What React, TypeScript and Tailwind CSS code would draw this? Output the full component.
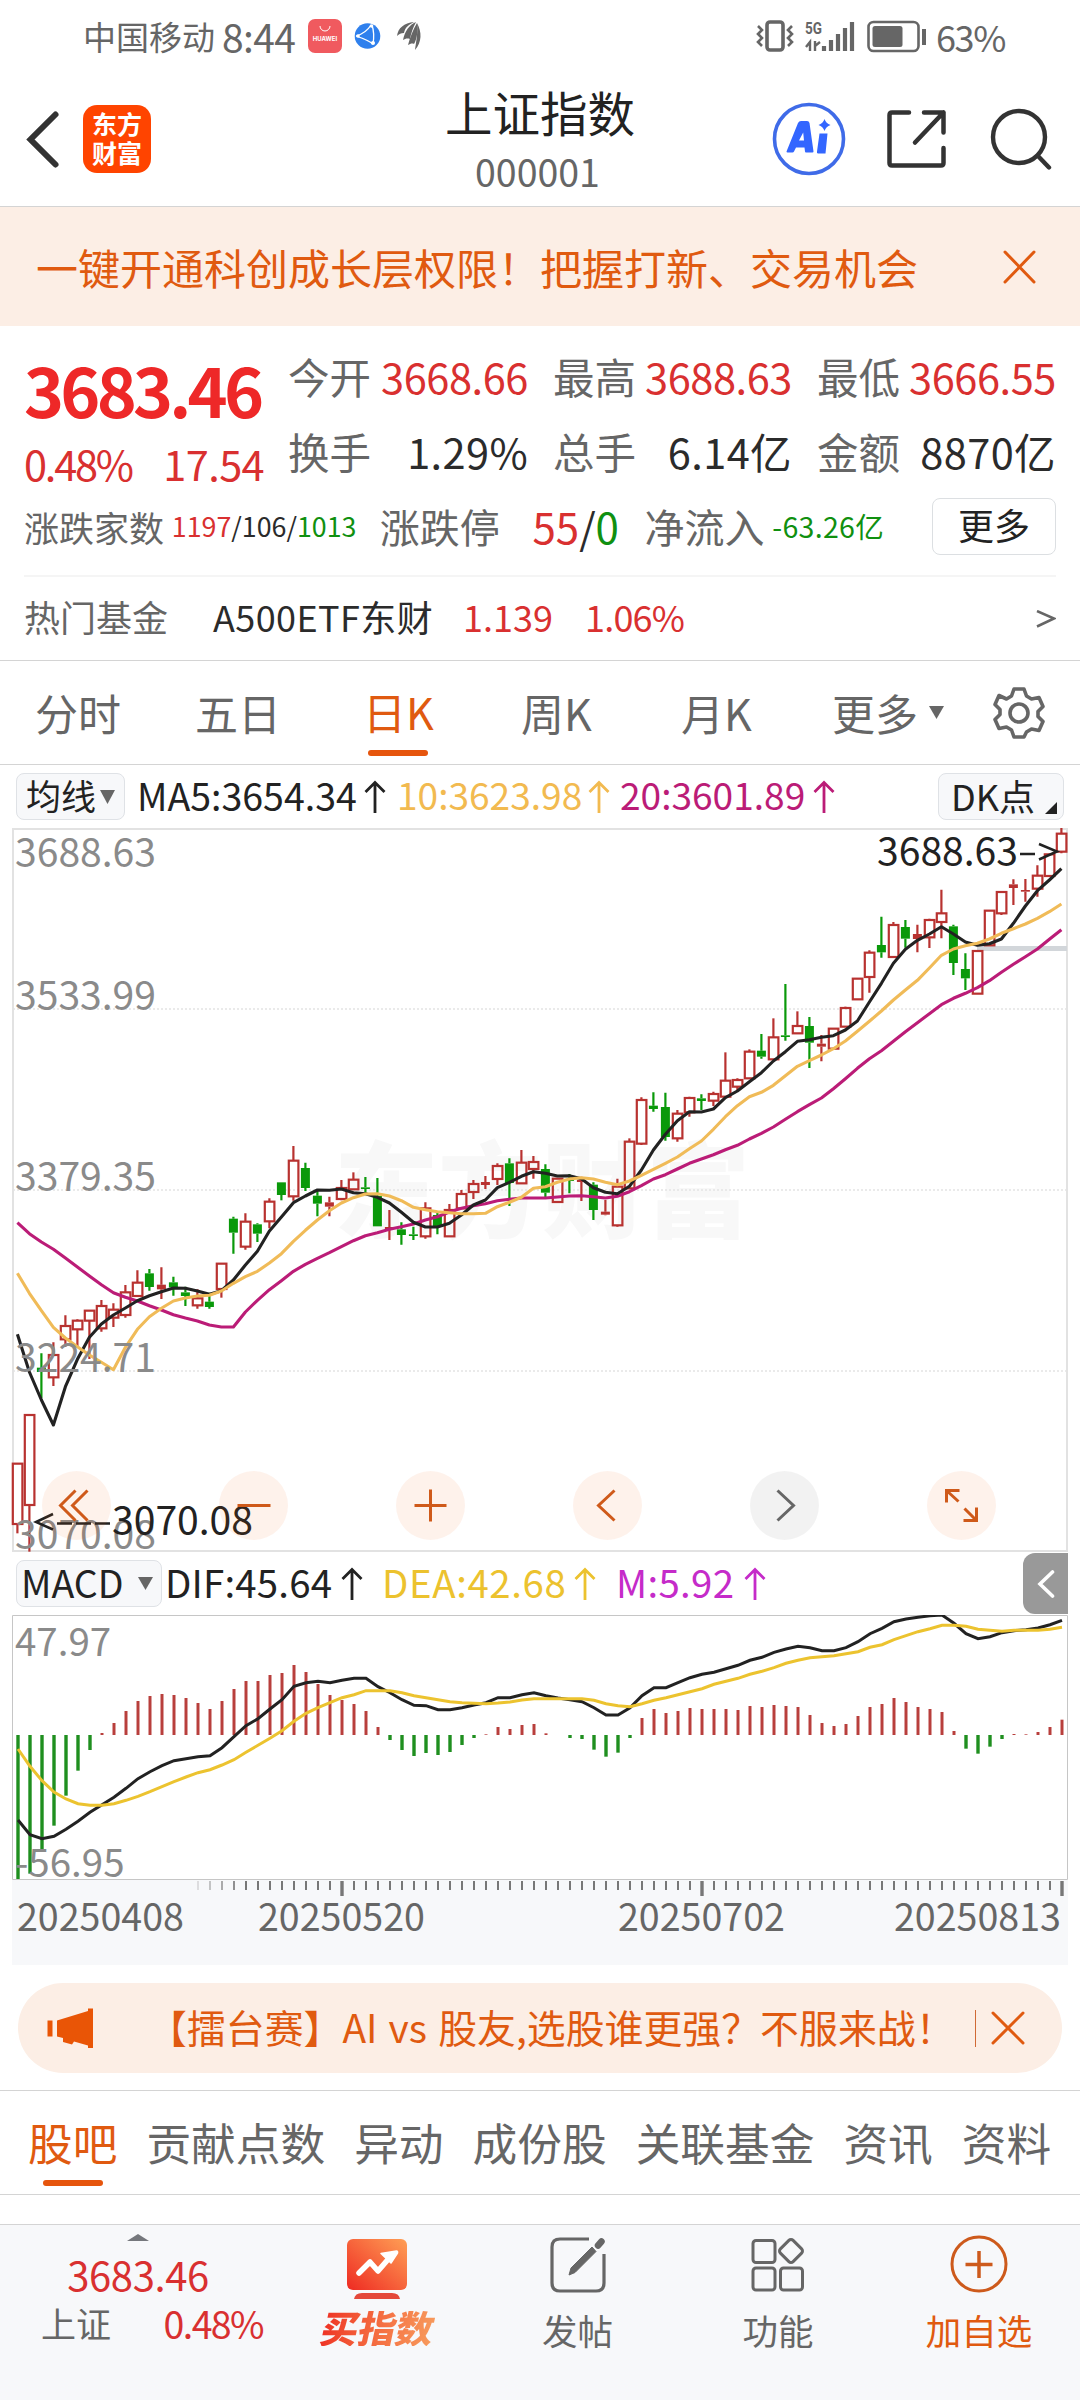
import React from "react"

type Candle = [up: number, high: number, top: number, bottom: number, low: number]

// every series below is stored in thirds of a pixel, measured down from the panel origin
const candles: Candle[] = [
  [1, 1931, 1931, 2112, 2140], [1, 1785, 1785, 2055, 2195], [0, 1600, 1643, 1656, 1735], [1, 1567, 1605, 1672, 1698],
  [1, 1486, 1518, 1558, 1580], [1, 1498, 1502, 1528, 1580], [1, 1470, 1472, 1502, 1617], [1, 1440, 1458, 1525, 1535],
  [1, 1450, 1469, 1493, 1521], [1, 1395, 1417, 1485, 1493], [1, 1351, 1388, 1428, 1430], [0, 1347, 1360, 1401, 1412],
  [1, 1342, 1394, 1408, 1437], [0, 1370, 1387, 1402, 1427], [0, 1400, 1417, 1428, 1458], [1, 1408, 1435, 1456, 1466],
  [0, 1418, 1445, 1461, 1466], [1, 1331, 1331, 1407, 1433], [0, 1190, 1196, 1238, 1301], [1, 1180, 1205, 1280, 1289],
  [0, 1210, 1213, 1241, 1266], [1, 1135, 1145, 1204, 1225], [0, 1087, 1087, 1125, 1141], [1, 978, 1022, 1129, 1142],
  [0, 1028, 1044, 1104, 1113], [0, 1110, 1127, 1151, 1189], [1, 1130, 1147, 1160, 1189], [1, 1080, 1104, 1137, 1141],
  [1, 1057, 1079, 1108, 1108], [0, 1071, 1102, 1107, 1118], [0, 1074, 1128, 1219, 1219], [1, 1170, 1221, 1227, 1260],
  [0, 1207, 1228, 1245, 1274], [0, 1220, 1243, 1248, 1260], [1, 1147, 1165, 1249, 1256], [0, 1178, 1185, 1220, 1243],
  [1, 1152, 1170, 1249, 1249], [1, 1110, 1122, 1165, 1165], [1, 1080, 1092, 1116, 1137], [1, 1068, 1086, 1095, 1107],
  [1, 1030, 1038, 1077, 1095], [0, 1015, 1030, 1089, 1158], [1, 990, 1028, 1090, 1090], [1, 1008, 1026, 1047, 1076],
  [0, 1033, 1047, 1118, 1133], [1, 1076, 1076, 1146, 1146], [0, 1062, 1078, 1083, 1120], [1, 1070, 1080, 1086, 1143],
  [0, 1087, 1094, 1170, 1200], [1, 1140, 1175, 1184, 1186], [1, 1076, 1100, 1216, 1220], [1, 955, 965, 1105, 1105],
  [1, 832, 840, 971, 975], [0, 817, 857, 867, 875], [0, 818, 861, 951, 962], [1, 870, 881, 955, 965],
  [1, 830, 834, 877, 890], [0, 823, 835, 843, 870], [1, 815, 822, 842, 858], [1, 697, 782, 830, 830],
  [1, 775, 780, 800, 810], [1, 688, 695, 775, 775], [0, 642, 692, 710, 716], [1, 595, 652, 718, 718],
  [0, 492, 646, 651, 662], [1, 574, 618, 640, 640], [0, 591, 618, 668, 744], [1, 645, 671, 680, 724],
  [1, 626, 626, 686, 686], [1, 560, 564, 620, 620], [1, 476, 476, 538, 538], [1, 391, 398, 471, 518],
  [0, 290, 375, 397, 413], [1, 306, 315, 411, 411], [0, 300, 321, 356, 383], [1, 314, 342, 357, 397],
  [1, 296, 300, 352, 384], [1, 209, 280, 306, 355], [0, 314, 319, 429, 465], [0, 400, 447, 475, 510],
  [1, 393, 393, 521, 521], [1, 272, 272, 376, 376], [1, 216, 216, 280, 285], [1, 178, 193, 204, 255],
  [1, 177, 210, 215, 245], [1, 136, 167, 206, 230], [1, 103, 103, 168, 168], [1, 24, 41, 95, 100],
]

const ma5 = [
  1543, 1656, 1740, 1815, 1700, 1618, 1552, 1512, 1485, 1464, 1442, 1427, 1415, 1404, 1405, 1413, 1423, 1412, 1380, 1335,
  1294, 1233, 1191, 1148, 1128, 1110, 1111, 1107, 1118, 1121, 1132, 1149, 1177, 1207, 1221, 1221, 1210, 1185, 1155, 1140,
  1103, 1087, 1069, 1055, 1060, 1068, 1067, 1076, 1103, 1117, 1121, 1099, 1050, 990, 943, 902, 875, 876, 867, 833,
  813, 785, 758, 723, 695, 664, 659, 652, 647, 630, 603, 546, 490, 430, 388, 361, 342, 320, 342, 366,
  376, 371, 357, 310, 258, 212, 180, 146,
]

const ma10 = [
  1360, 1420, 1472, 1522, 1554, 1580, 1605, 1627, 1649, 1582, 1528, 1490, 1465, 1443, 1434, 1428, 1426, 1413, 1390, 1370,
  1354, 1329, 1301, 1264, 1231, 1200, 1172, 1149, 1133, 1122, 1121, 1128, 1142, 1162, 1169, 1175, 1178, 1181, 1181, 1180,
  1160, 1147, 1132, 1105, 1100, 1087, 1077, 1073, 1077, 1087, 1094, 1083, 1066, 1048, 1030, 1011, 986, 963, 928, 890,
  857, 830, 817, 796, 767, 739, 722, 705, 686, 663, 634, 604, 573, 540, 510, 481, 444, 406, 387, 377,
  370, 357, 340, 326, 312, 295, 275, 252,
]

const ma20 = [
  1208, 1241, 1266, 1288, 1314, 1341, 1368, 1394, 1418, 1432, 1443, 1457, 1470, 1484, 1494, 1503, 1515, 1521, 1521, 1476,
  1441, 1409, 1382, 1354, 1333, 1315, 1298, 1280, 1262, 1247, 1238, 1228, 1220, 1212, 1200, 1190, 1176, 1165, 1157, 1151,
  1142, 1138, 1134, 1134, 1134, 1131, 1128, 1127, 1130, 1134, 1129, 1115, 1097, 1077, 1064, 1047, 1030, 1017, 1004, 989,
  976, 957, 940, 921, 898, 875, 854, 834, 806, 776, 745, 716, 692, 664, 635, 608, 581, 554, 535, 520,
  503, 482, 457, 433, 410, 387, 358, 329,
]

const macd = [
  -432, -416, -345, -272, -182, -107, -45, 6, 36, 72, 102, 117, 123, 120, 111, 96, 78, 102, 138, 162,
  162, 180, 186, 210, 189, 153, 120, 105, 93, 72, 24, -15, -45, -63, -54, -60, -51, -30, -9, 2,
  24, 18, 30, 33, 5, 0, -9, -12, -44, -65, -53, -9, 51, 78, 66, 72, 81, 78, 78, 78,
  75, 87, 84, 90, 87, 84, 60, 36, 27, 33, 57, 84, 93, 111, 99, 84, 78, 69, 12, -41,
  -56, -35, -12, 3, 2, 9, 24, 46,
]

const dif = [
  841, 885, 897, 890, 869, 845, 818, 795, 773, 746, 717, 696, 678, 663, 657, 651, 648, 624, 591, 558,
  537, 508, 480, 440, 429, 425, 429, 422, 416, 416, 441, 459, 480, 497, 498, 510, 510, 504, 496, 489,
  474, 474, 465, 459, 468, 475, 480, 486, 504, 526, 526, 504, 468, 444, 444, 429, 414, 404, 398, 387,
  377, 362, 353, 338, 328, 320, 324, 333, 333, 324, 306, 282, 266, 246, 238, 233, 228, 226, 251, 282,
  297, 291, 279, 273, 270, 265, 255, 242,
]

const dea = [
  628, 680, 723, 757, 778, 792, 797, 797, 792, 782, 770, 756, 741, 726, 712, 699, 690, 676, 660, 638,
  617, 596, 573, 545, 521, 504, 489, 474, 465, 453, 453, 453, 459, 468, 474, 480, 486, 489, 491, 492,
  490, 487, 481, 477, 477, 477, 477, 477, 482, 492, 498, 501, 492, 482, 474, 465, 456, 447, 434, 425,
  416, 404, 395, 384, 371, 362, 354, 351, 348, 342, 336, 323, 315, 300, 288, 276, 267, 257, 257, 260,
  269, 272, 275, 272, 272, 272, 269, 263,
]

const line = (values: number[], x0: number, origin: number) =>
  values.map((v, i) => `${x0 + i * 12},${((v - origin) / 3).toFixed(1)}`).join(" ")

const StatusBar = () => (
  <div className="flex h-[72px] items-center pl-[83px] text-[#666]">
    <span className="w-[139px] text-[33px] leading-none">中国移动</span>
    <span className="w-[86px] text-[39px] leading-none tracking-[-0.6px]">8:44</span>
    <svg width="34" height="34" viewBox="0 0 34 34">
      <rect width="34" height="34" rx="7" fill="#f05a5f" />
      <path d="M12 7a5 5 0 0 0 10 0" fill="none" stroke="#fff" strokeWidth="1" />
      <text x="17" y="22" textAnchor="middle" fontSize="6" fontWeight="700" fill="#fff" fontFamily="Inter, sans-serif">
        HUAWEI
      </text>
    </svg>
    <svg className="ml-[12px]" width="27" height="28" viewBox="0 0 27 28">
      <circle cx="13.5" cy="14" r="12.8" fill="#2f80ed" />
      <path d="M17 3C14 8 9 12 2 14M2 14c6 2 12 4 17 8M18 3c2 6 2 13 1 19" fill="none" stroke="#fff" strokeWidth="1.3" />
      <circle cx="17.5" cy="4" r="1.8" fill="#fff" />
      <circle cx="19" cy="21" r="2" fill="#fff" />
      <circle cx="4" cy="14" r="1.8" fill="#fff" />
    </svg>
    <svg className="ml-[15px]" width="26" height="30" viewBox="0 0 26 30">
      <path d="M1 15C2 7 8 2 18 1c-6 3-9 6-10 11-3 0-5 1-7 3Z" fill="#666" />
      <path d="M7 19C9 10 13 4 20 1c-3 6-5 11-6 17-3-1-5 0-7 1Z" fill="#666" />
      <path d="M12 24c2-8 5-15 9-22 1 8 0 16-3 21-2-1-4 0-6 1Z" fill="#666" />
      <path d="M19 29c1-8 3-16 2-27 5 9 5 19-2 27Z" fill="#666" />
    </svg>
    <svg className="ml-[334px]" width="172" height="34" viewBox="0 0 172 34" fill="none" stroke="#666">
      <rect x="11" y="3" width="16" height="28" rx="3" strokeWidth="3.6" />
      <path d="M2 7l4 4-4 4 4 4-4 4 4 4M36 7l-4 4 4 4-4 4 4 4-4 4" strokeWidth="2.6" />
      <text x="49" y="15" fontSize="16.5" fontWeight="700" fill="#666" stroke="none" textLength="17" lengthAdjust="spacingAndGlyphs" fontFamily="Roboto, sans-serif">
        5G
      </text>
      <path d="M54 32V23l-4 5M59 22v10M59 27l5-4" strokeWidth="2.4" />
      <path d="M68 32v-5M75 32V21M82 32V15M89 32V9M96 32V3" strokeWidth="4.2" />
      <rect x="112.5" y="3" width="50" height="29" rx="5" strokeWidth="2.6" />
      <rect x="116.5" y="7" width="30" height="21" rx="2.5" fill="#666" stroke="none" />
      <path d="M168 10v16" strokeWidth="4" />
    </svg>
    <span className="ml-[8px] text-[36px] leading-none tracking-[-1.4px]">63%</span>
  </div>
)

const Header = () => (
  <div className="flex h-[135px] items-center border-b border-[#d4d4d4] pl-[24px]">
    <svg width="37" height="62" viewBox="0 0 37 62" fill="none" stroke="#333" strokeWidth="6" strokeLinecap="round">
      <path d="M31.5 6.5 6.5 31.5 31.5 56.5" />
    </svg>
    <div className="ml-[22px] flex h-[68px] w-[68px] flex-col items-center rounded-[14px] bg-[#ff4400] pt-[4px] text-[25px] font-bold leading-[29px] text-white">
      <span>东方</span>
      <span>财富</span>
    </div>
    <div className="ml-[239px] flex w-[300px] flex-col items-center">
      <div className="text-[47.5px] leading-[64px] text-[#222]">上证指数</div>
      <div className="mr-[5px] text-[37.5px] leading-[54px] text-[#666]">000001</div>
    </div>
    <svg className="ml-[82px]" width="74" height="76" viewBox="0 0 74 76">
      <circle cx="37" cy="38" r="34.5" fill="none" stroke="#3f6be8" strokeWidth="3.6" />
      <path
        d="M14.5 50.5 26 22q1-2 3-2h6q2 0 2.5 2l4 28.5q0 1-1 1h-6.5q-1 0-1-1l-.5-4H24l-2 4q-.5 1-1.500 1h-5q-1 0-1-1ZM27 39.500h5l-.8-8Z"
        fill="#3366ff"
        fillRule="evenodd"
      />
      <path d="M47.5 32.5h8l-2 20h-7.5q-1.500 0-1-2Z" fill="#3366ff" />
      <path d="M52.5 18q1.5 4.500 6 6-4.500 1.500-6 6-1.500-4.500-6-6 4.500-1.500 6-6Z" fill="#3366ff" />
    </svg>
    <svg className="ml-[39px]" width="62" height="62" viewBox="0 0 62 62" fill="none" stroke="#333" strokeWidth="4.5" strokeLinecap="round" strokeLinejoin="round">
      <path d="M24 4.500H7q-2.500 0-2.500 2.500v48q0 2.500 2.500 2.500h49q2.500 0 2.500-2.500V40M39 4.500h19.500v20M58.500 4.500 30 34.500" />
    </svg>
    <svg className="ml-[41px]" width="64" height="64" viewBox="0 0 64 64" fill="none" stroke="#333" strokeWidth="4.4" strokeLinecap="round">
      <circle cx="31" cy="30" r="26" />
      <path d="m50 49 11 11.5" />
    </svg>
  </div>
)

const Notice = () => (
  <div className="flex h-[119px] items-center justify-between bg-[#fceee5] pr-[44px] pl-[36px] text-[#e05a10]">
    <span className="text-[42px] leading-none">一键开通科创成长层权限！把握打新、交易机会</span>
    <svg width="33" height="34" viewBox="0 0 33 34" stroke="#e05a10" strokeWidth="3" strokeLinecap="round">
      <path d="M2 2l29 30M31 2 2 32" />
    </svg>
  </div>
)

interface StatProps {
  label: string
  value: string
  red?: boolean
}

const Stat: React.FC<StatProps> = ({ label, value, red }) => (
  <div className="flex h-[75px] items-center justify-between text-[41.5px] leading-none">
    <span className="text-[#666]">{label}</span>
    <span className={red ? "tracking-[-0.4px] text-[#d93030]" : "tracking-[0.4px] text-[#2b2b2b]"}>{value}</span>
  </div>
)

const Quote = () => (
  <div className="h-[335px] border-b border-[#d4d4d4] pr-[24px] pl-[24px]">
    <div className="flex h-[164px] pt-[12px]">
      <div className="w-[264px]">
        <div className="h-[87px] pt-[5px] text-[68px] leading-[92px] font-bold tracking-[-3.8px] text-[#ee2828]">3683.46</div>
        <div className="flex h-[76px] items-center justify-between pt-[2px] pr-[24px] text-[41.5px] leading-none tracking-[-0.6px] text-[#d93030]">
          <span className="tracking-[-2.2px]">0.48%</span>
          <span>17.54</span>
        </div>
      </div>
      <div className="grid grid-cols-[240px_239px_239px] gap-x-[25px] pt-[1px]">
        <Stat label="今开" value="3668.66" red />
        <Stat label="最高" value="3688.63" red />
        <Stat label="最低" value="3666.55" red />
        <Stat label="换手" value="1.29%" />
        <Stat label="总手" value="6.14亿" />
        <Stat label="金额" value="8870亿" />
      </div>
    </div>
    <div className="flex h-[87px] items-center border-b-2 border-[#f5f5f5] pb-[13px] leading-none text-[#666]">
      <span className="w-[148px] text-[35px]">涨跌家数</span>
      <span className="w-[208px] text-[26.8px] text-[#2b2b2b]">
        <span className="text-[#d93030]">1197</span>/106/<span className="text-[#109010]">1013</span>
      </span>
      <span className="w-[153px] text-[40px]">涨跌停</span>
      <span className="w-[112px] text-[42px] text-[#2b2b2b]">
        <span className="text-[#d93030]">55</span>/<span className="text-[#109010]">0</span>
      </span>
      <span className="w-[128px] text-[40px]">净流入</span>
      <span className="w-[160px] text-[28.5px] tracking-[0.3px] text-[#109010]">-63.26亿</span>
      <span className="flex h-[57px] w-[124px] items-center justify-center rounded-[8px] border border-[#dcdfe2] pb-[5px] text-[36px] text-[#222]">
        更多
      </span>
    </div>
    <div className="flex h-[78px] items-center text-[36px] leading-none">
      <span className="w-[189px] text-[#666]">热门基金</span>
      <span className="w-[250px] tracking-[0.4px] text-[#2b2b2b]">A500ETF东财</span>
      <span className="w-[122px] text-[#d93030]">1.139</span>
      <span className="tracking-[-0.8px] text-[#d93030]">1.06%</span>
      <svg className="mt-[5px] ml-auto" width="20" height="18" viewBox="0 0 20 18" fill="none" stroke="#666" strokeWidth="2.5">
        <path d="m1 1 17 7.5L1 16.500" />
      </svg>
    </div>
  </div>
)

const PeriodTabs = () => (
  <div className="flex h-[104px] items-center border-b border-[#d4d4d4] pl-[35px] text-[43px] leading-none text-[#666]">
    <span className="w-[160px]">分时</span>
    <span className="w-[168px]">五日</span>
    <span className="flex h-full w-[158px] flex-col pt-[29px] text-[#e05a10]">
      日K
      <i className="mt-[17px] ml-[5px] h-[6px] w-[60px] rounded-full bg-[#e6550d]" />
    </span>
    <span className="w-[160px]">周K</span>
    <span className="w-[151px]">月K</span>
    <span className="w-[97px]">更多</span>
    <svg width="15" height="13" viewBox="0 0 15 13">
      <path d="M0 0h15L7.5 13Z" fill="#666" />
    </svg>
    <svg className="ml-[48px]" width="54" height="54" viewBox="0 0 54 54" fill="none" stroke="#666" strokeWidth="3.6" strokeLinejoin="round">
      <path d="M22 3h10l2.5 7 5 3 7.5-1.500 4 9-5 5v5l5 5-4 9-7.500-1.500-5 3L32 51H22l-2.500-7-5-3L7 42.500l-4-9 5-5v-5l-5-5 4-9L14.500 13l5-3Z" />
      <circle cx="27" cy="27" r="9" />
    </svg>
  </div>
)

const UpArrow = ({ className }: { className?: string }) => (
  <svg className={className} width="22" height="34" viewBox="0 0 22 34" fill="none" stroke="currentColor" strokeWidth="2.8">
    <path d="M11 33V3M1.5 12 11 2.5 20.500 12" />
  </svg>
)

const MaRow = () => (
  <div className="flex h-[63px] items-center pl-[16px] leading-none">
    <div className="flex h-[47px] w-[109px] items-center rounded-[8px] border border-[#dfe2e6] bg-[#f7f8fa] pl-[9px] text-[35px] text-[#222]">
      <span className="-mt-[4px] w-[74px]">均线</span>
      <svg width="15" height="14" viewBox="0 0 15 14">
        <path d="M0 0h15L7.5 14Z" fill="#666" />
      </svg>
    </div>
    <span className="-mt-[4px] ml-[12px] w-[227px] text-[37.5px] text-[#222]">MA5:3654.34</span>
    <UpArrow className="text-[#222]" />
    <span className="-mt-[4px] ml-[11px] w-[191px] text-[37.1px] text-[#f2ba50]">10:3623.98</span>
    <UpArrow className="text-[#f2ba50]" />
    <span className="-mt-[4px] ml-[10px] w-[193px] text-[37.1px] text-[#bb1c77]">20:3601.89</span>
    <UpArrow className="text-[#bb1c77]" />
    <div className="mr-[16px] ml-auto flex h-[47px] w-[126px] items-center rounded-[8px] border border-[#dfe2e6] bg-[#f7f8fa] pl-[12px] text-[36px] text-[#222]">
      <span className="-mt-[4px] w-[94px]">DK点</span>
      <svg className="mt-[22px]" width="12" height="12" viewBox="0 0 12 12">
        <path d="M12 0v12H0Z" fill="#222" />
      </svg>
    </div>
  </div>
)

const CandleBar = ({ candle, x }: { candle: Candle; x: number }) => {
  const [up, ...levels] = candle
  const [high, top, bottom, low] = levels.map((v) => (v - 24) / 3)
  const color = up ? "#b83230" : "#0a990a"
  const solid = !up || bottom - top < 6
  return (
    <g stroke={color} strokeWidth="2.2">
      <path d={`M${x} ${high}V${top}M${x} ${bottom}V${low}`} />
      {solid ? (
        <rect x={x - 4.5} y={top} width="9" height={Math.max(bottom - top, 1)} fill={color} stroke="none" />
      ) : (
        <rect x={x - 4.6} y={top} width="9.6" height={bottom - top} fill="none" />
      )}
    </g>
  )
}

const chartButtons = [
  { icon: "M-1-15-16 0-1 15M11-15-4 0l15 15", gray: false },
  { icon: "M-16 0h33", gray: false },
  { icon: "M-16 0h32M0-16v32", gray: false },
  { icon: "M7-15-9 0 7 15", gray: false },
  { icon: "M-7-15 9 0-7 15", gray: true },
  { icon: "M-15-3v-12h13M-15-15-3-4M3 3 15 15M15 2v13H2", gray: false },
]

const KChart = () => (
  <svg className="block" width="1080" height="724" viewBox="0 0 1080 724">
    <text x="334" y="402" fontSize="104" fontWeight="900" fill="#f8f8f8">
      东方财富
    </text>
    <path d="M13 181H1067M13 362H1067M13 543H1067" stroke="#e3e3e3" strokeWidth="1.5" strokeDasharray="2 2" />
    <path d="M13 1H1067V723H13Z" fill="none" stroke="#e2e2e2" strokeWidth="2" />
    <rect x="977" y="118" width="90" height="5" fill="#d2d6da" />
    {candles.map((c, i) => (
      <CandleBar key={i} candle={c} x={17.4 + i * 12} />
    ))}
    <g fill="none" strokeWidth="3.1" strokeLinejoin="round">
      <polyline points={line(ma20, 17.4, 24)} stroke="#bb1c77" />
      <polyline points={line(ma5, 17.4, 24)} stroke="#222" />
      <polyline points={line(ma10, 17.4, 24)} stroke="#f0bb58" />
    </g>
    <g fontSize="39.1" fill="#8a8a8a">
      <text x="15" y="39">3688.63</text>
      <text x="15" y="182">3533.99</text>
      <text x="15" y="363">3379.35</text>
      <text x="15" y="544">3224.71</text>
      <text x="15" y="721">3070.08</text>
    </g>
    <g fontSize="39.1" fill="#222">
      <text x="877" y="38">3688.63</text>
      <text x="112" y="707">3070.08</text>
    </g>
    <path d="M1020 26h15M1039 16l18 7.5-18 8M53 686l-17 8 17 7.5M57 695.500h15M76 695.500h15M95 695.500h15" fill="none" stroke="#222" strokeWidth="2.5" />
    {chartButtons.map((b, i) => (
      <g key={i} transform={`translate(${76.5 + i * 177} 677.5)`} fill="none">
        <circle r="34.5" fill={b.gray ? "#000" : "#ee5500"} fillOpacity={b.gray ? 0.05 : 0.08} />
        <path d={b.icon} stroke={b.gray ? "#666" : "#cf5a1a"} strokeWidth="3" />
      </g>
    ))}
  </svg>
)

const MacdRow = () => (
  <div className="flex h-[63px] items-center pl-[16px] text-[38.4px] leading-none">
    <div className="flex h-[47px] w-[146px] items-center rounded-[8px] border border-[#dfe2e6] bg-[#f7f8fa] pl-[4px] text-[37.5px] text-[#222]">
      <span className="-mt-[4px] w-[117px]">MACD</span>
      <svg width="15" height="13" viewBox="0 0 15 13">
        <path d="M0 0h15L7.5 13Z" fill="#666" />
      </svg>
    </div>
    <span className="-mt-[4px] ml-[3px] w-[176px] tracking-[0.2px] text-[#222]">DIF:45.64</span>
    <UpArrow className="text-[#222]" />
    <span className="-mt-[4px] ml-[19px] w-[192px] tracking-[0.6px] text-[#ecc22e]">DEA:42.68</span>
    <UpArrow className="text-[#ecc22e]" />
    <span className="-mt-[4px] ml-[20px] w-[128px] tracking-[0.3px] text-[#c52bc9]">M:5.92</span>
    <UpArrow className="text-[#c52bc9]" />
    <div className="mr-[12px] ml-auto flex h-[61px] w-[45px] items-center justify-center rounded-l-[12px] bg-[#999]">
      <svg width="18" height="30" viewBox="0 0 18 30" fill="none" stroke="#fff" strokeWidth="3.6" strokeLinecap="round">
        <path d="M15.5 3 3 15l12.5 12" />
      </svg>
    </div>
  </div>
)

const MacdChart = () => (
  <svg className="block" width="1080" height="350" viewBox="0 0 1080 350">
    <rect x="12" y="265" width="1056" height="85" fill="#f7f8fa" />
    <path d="M12.5.5H1067.5V264.5H12.5Z" fill="none" stroke="#c6c6c6" />
    {macd.map((v, i) => (
      <path key={i} d={`M${18 + i * 12} 120v${-v / 3}`} stroke={v > 0 ? "#b83f3c" : "#1f8f1f"} strokeWidth={v > 0 ? 3 : 3.4} />
    ))}
    <polyline points={line(dif, 18, 226)} fill="none" stroke="#222" strokeWidth="3" />
    <polyline points={line(dea, 18, 226)} fill="none" stroke="#ecc32f" strokeWidth="3" />
    {macd.map((_, i) => {
      if (i < 15) return null
      const major = i % 30 === 27
      return (
        <path
          key={i}
          d={`M${18 + i * 12} 266v${major ? 15 : 9}`}
          stroke="#777"
          strokeWidth={major ? 3.4 : 2}
          opacity={Math.min(1, (i - 14) / 5)}
        />
      )
    })}
    <g fontSize="38.5" fill="#8a8a8a">
      <text x="15" y="41">47.97</text>
      <text x="15" y="262">-56.95</text>
    </g>
    <g fontSize="37.6" fill="#666">
      <text x="17" y="316">20250408</text>
      <text x="258" y="316">20250520</text>
      <text x="618" y="316">20250702</text>
      <text x="894" y="316">20250813</text>
    </g>
  </svg>
)

const Promo = () => (
  <div className="mx-[18px] mt-[18px] flex h-[90px] items-center rounded-full bg-[#fceee5] pl-[29px] text-[#e05a10]">
    <svg width="46" height="40" viewBox="0 0 46 40" fill="#e95506">
      <path d="M.5 12.500h5v16h-5ZM10 12.500 41 3V.5h5V40h-5v-2.500l-14-4-2 3-9-2.500v-4l-6-1.500Z" />
    </svg>
    <span className="mt-[-3px] ml-[55px] w-[827px] text-[38.9px] leading-none [word-spacing:2.4px] whitespace-nowrap">
      【擂台赛】AI vs 股友,选股谁更强？不服来战！
    </span>
    <i className="h-[37px] w-[1px] bg-[#d06a35]" />
    <svg className="ml-[15px]" width="34" height="34" viewBox="0 0 34 34" stroke="#e05a10" strokeWidth="3" strokeLinecap="round">
      <path d="M2 2l30 30M32 2 2 32" />
    </svg>
  </div>
)

const sections = ["贡献点数", "异动", "成份股", "关联基金", "资讯", "资料"]

const SectionTabs = () => (
  <div className="mt-[17px] flex h-[105px] gap-[29px] border-y border-[#d4d4d4] pt-[29px] pl-[28px] text-[44.7px] leading-none whitespace-nowrap text-[#666]">
    <span className="flex flex-col items-center text-[#e05a10]">
      股吧
      <i className="mt-[15px] h-[6px] w-[60px] rounded-full bg-[#e6550d]" />
    </span>
    {sections.map((s) => (
      <span key={s}>{s}</span>
    ))}
  </div>
)

const BottomBar = () => (
  <div className="mt-[29px] flex h-[176px] border-t border-[#d4d4d4] bg-[#f7f8fa] text-[35.5px] leading-none text-[#666]">
    <div className="flex w-[276px] flex-col items-center pt-[9px]">
      <svg width="22" height="7" viewBox="0 0 22 7">
        <path d="M0 7 11 0l11 7Z" fill="#75777c" />
      </svg>
      <span className="mt-[13px] text-[40px] tracking-[-0.4px] text-[#d93030]">3683.46</span>
      <div className="mt-[10px] ml-[41px] flex w-[222px] items-center justify-between self-start">
        <span className="text-[35px]">上证</span>
        <span className="text-[37.5px] tracking-[-1.6px] text-[#d93030]">0.48%</span>
      </div>
    </div>
    <div className="flex w-[202px] flex-col items-center pt-[14px]">
      <svg width="60" height="61" viewBox="0 0 60 61">
        <defs>
          <linearGradient id="buy" x1="0" y1="1" x2="1" y2="0">
            <stop offset="0" stopColor="#ee2a22" />
            <stop offset="1" stopColor="#ff9f55" />
          </linearGradient>
        </defs>
        <rect width="60" height="51" rx="6" fill="url(#buy)" />
        <path d="M12 34 23 23l8 9 13-15" fill="none" stroke="#fff" strokeWidth="5.5" strokeLinecap="round" strokeLinejoin="round" />
        <path d="M34 14.500 49.500 12Q51 12 50.500 14L44 24Z" fill="#fff" stroke="#fff" strokeWidth="1.5" strokeLinejoin="round" />
        <path d="M7 60q1-6 8-6h30q7 0 8 6Z" fill="#e4483a" />
      </svg>
      <span className="mt-[8px] ml-[2px] -skew-x-12 bg-linear-to-r from-[#ee3024] to-[#f79a5c] bg-clip-text text-[37.5px] font-black text-transparent">
        买指数
      </span>
    </div>
    <div className="flex w-[199px] flex-col items-center pt-[12px]">
      <svg width="56" height="56" viewBox="0 0 56 56" fill="none" stroke="#666" strokeWidth="3.2">
        <path d="M39 2H10Q2 2 2 10v36q0 8 8 8h36q8 0 8-8V17" />
        <path d="M19 38 21 31 42 10l4 4.500L25 35.500Z" fill="#666" strokeWidth="1" />
        <path d="m48 8.500 3.500-4" strokeWidth="6.5" strokeLinecap="round" />
      </svg>
      <span className="mt-[19px]">发帖</span>
    </div>
    <div className="flex w-[202px] flex-col items-center pt-[13px]">
      <svg width="54" height="54" viewBox="0 0 54 54" fill="none" stroke="#666" strokeWidth="3">
        <rect x="2" y="2.5" width="22" height="22" rx="3" />
        <rect x="2" y="30" width="22" height="22" rx="3" />
        <rect x="29.5" y="30" width="22" height="22" rx="3" />
        <rect x="31" y="4" width="18" height="18" rx="3" transform="rotate(45 40 13)" />
      </svg>
      <span className="mt-[20px]">功能</span>
    </div>
    <div className="flex w-[200px] flex-col items-center pt-[10px] text-[#e05a10]">
      <svg width="58" height="58" viewBox="0 0 58 58" fill="none" stroke="#cd5a1c" strokeWidth="3">
        <circle cx="29" cy="29" r="27" />
        <path d="M15.5 29.500h27M29 16v27" strokeWidth="3.5" />
      </svg>
      <span className="mt-[19px]">加自选</span>
    </div>
  </div>
)

export default function App() {
  return (
    <div lang="zh-CN" className="w-[1080px] bg-white font-['Noto_Sans_CJK_SC',sans-serif]">
      <StatusBar />
      <Header />
      <Notice />
      <Quote />
      <PeriodTabs />
      <MaRow />
      <KChart />
      <MacdRow />
      <MacdChart />
      <Promo />
      <SectionTabs />
      <BottomBar />
    </div>
  )
}
